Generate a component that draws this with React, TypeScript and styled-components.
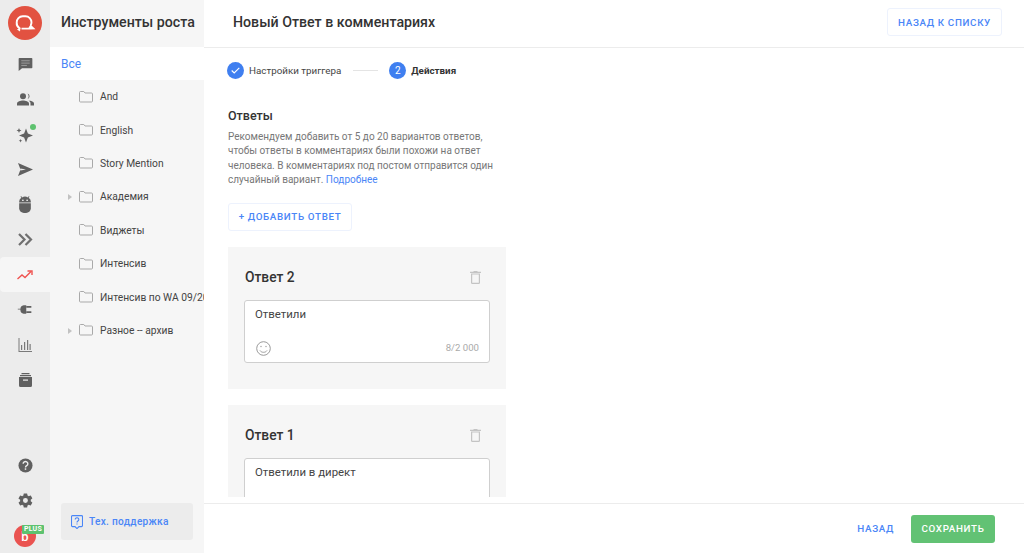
import React from 'react';
import styled, { createGlobalStyle } from 'styled-components';

const Global = createGlobalStyle`
  html, body { margin: 0; padding: 0; height: 100%; background: #fff; }
  body { font-family: Roboto, "Noto Sans", sans-serif; color: #333; overflow: hidden; }
  #root { height: 100%; }
  * { box-sizing: border-box; }
`;

const Page = styled.div`
  display: flex;
  width: 1024px;
  height: 553px;
  overflow: hidden;
`;

const Rail = styled.nav`
  flex: 0 0 50px;
  display: flex;
  flex-direction: column;
  background: #ececec;
`;

const LogoBox = styled.div`
  height: 47px;
  padding: 6px 0 0 8px;
`;

const RailItem = styled.div<{ $active?: boolean }>`
  position: relative;
  height: 35px;
  display: flex;
  align-items: center;
  justify-content: center;
  color: #606060;
  background: ${p => (p.$active ? '#f6f6f6' : 'transparent')};
  border-radius: ${p => (p.$active ? '4px 0 0 4px' : '0')};
`;

const Spacer = styled.div`
  flex: 1;
`;

const Dot = styled.span`
  position: absolute;
  top: 7px;
  left: 30px;
  width: 6px;
  height: 6px;
  border-radius: 50%;
  background: #5ec26f;
`;

const Avatar = styled.div`
  width: 22px;
  height: 22px;
  border-radius: 50%;
  background: #ea5350;
  color: #fff;
  font-size: 13px;
  font-weight: 500;
  line-height: 23px;
  text-align: center;
`;

const PlusBadge = styled.span`
  position: absolute;
  top: 7px;
  left: 22px;
  width: 22px;
  height: 9px;
  border-radius: 1px;
  background: #5ec26f;
  color: #fff;
  font-size: 7px;
  font-weight: 700;
  line-height: 9px;
  text-align: center;
  letter-spacing: 0.2px;
`;

const Sidebar = styled.aside`
  flex: 0 0 154px;
  display: flex;
  flex-direction: column;
  background: #f6f6f6;
  overflow: hidden;
`;

const SideTitle = styled.h2`
  height: 47px;
  margin: 0;
  padding: 0 0 3px 11px;
  display: flex;
  align-items: center;
  font-size: 14.2px;
  font-weight: 500;
  color: #333;
  white-space: nowrap;
`;

const AllRow = styled.div`
  height: 33px;
  padding-left: 11px;
  display: flex;
  align-items: center;
  background: #fff;
  color: #4a86f7;
  font-size: 12px;
`;

const TreeRow = styled.div`
  position: relative;
  height: 33.4px;
  padding-left: 29px;
  display: flex;
  align-items: center;
  gap: 7px;
  font-size: 10.25px;
  color: #444;
  white-space: nowrap;
  svg { flex: none; }
`;

const Caret = styled.span`
  position: absolute;
  left: 18px;
  top: 14px;
  width: 0;
  height: 0;
  border-left: 4px solid #c2c2c2;
  border-top: 3px solid transparent;
  border-bottom: 3px solid transparent;
`;

const SupportBox = styled.div`
  margin: auto 11px 13px;
  height: 37px;
  display: flex;
  align-items: center;
  gap: 6px;
  padding-left: 10px;
  background: #ececec;
  border-radius: 3px;
  color: #4a86f7;
  font-size: 10.1px;
  font-weight: 500;
  letter-spacing: 0.3px;
  white-space: nowrap;
`;

const Main = styled.main`
  flex: 1;
  min-width: 0;
  display: flex;
  flex-direction: column;
`;

const TopBar = styled.header`
  flex: 0 0 48px;
  display: flex;
  align-items: center;
  justify-content: space-between;
  padding: 0 22px 3px 29px;
  border-bottom: 1px solid #ececec;
`;

const PageTitle = styled.h1`
  margin: 0;
  font-size: 14.2px;
  font-weight: 500;
  color: #333;
`;

const OutlineButton = styled.button`
  width: 115px;
  height: 28px;
  padding: 0;
  background: #fff;
  border: 1px solid #edf2fd;
  border-radius: 3px;
  color: #4a86f7;
  font: 500 9.8px Roboto, sans-serif;
  letter-spacing: 0.65px;
  white-space: nowrap;
`;

const Body = styled.div`
  flex: 0 0 449px;
  margin-bottom: 6px;
  overflow: hidden;
  padding: 14px 0 0 24px;
`;

const Stepper = styled.div`
  height: 17px;
  display: flex;
  align-items: center;
  font-size: 9.8px;
  color: #444;
  margin-left: -1px;
`;

const StepDot = styled.span`
  width: 17px;
  height: 17px;
  margin-right: 5px;
  border-radius: 50%;
  background: #3f7ff0;
  color: #fff;
  font-size: 10px;
  display: flex;
  align-items: center;
  justify-content: center;
`;

const StepLine = styled.span`
  width: 25px;
  height: 1px;
  margin: 0 11px 0 12px;
  background: #e4e4e4;
`;

const StepBold = styled.span`
  font-weight: 700;
  color: #333;
`;

const SectionTitle = styled.h3`
  margin: 28px 0 0;
  font-size: 12.5px;
  line-height: 18px;
  font-weight: 500;
  color: #333;
`;

const Paragraph = styled.p`
  width: 278px;
  margin: 5px 0 0;
  font-size: 10px;
  line-height: 14.4px;
  color: #777;
`;

const LinkText = styled.span`
  color: #4a86f7;
`;

const AddButton = styled(OutlineButton)`
  display: block;
  margin-top: 15px;
  width: 124px;
`;

const Card = styled.section`
  width: 278px;
  height: 142px;
  margin-top: 16px;
  padding: 17px 16px 0 16px;
  background: #f6f6f6;
`;

const CardHead = styled.div`
  height: 27px;
  padding: 0 9px 0 1px;
  display: flex;
  align-items: center;
  justify-content: space-between;
  margin-bottom: 9px;
`;

const CardTitle = styled.h4`
  margin: 0;
  font-size: 13.8px;
  font-weight: 500;
  color: #333;
`;

const Field = styled.div`
  height: 63px;
  padding: 6px 10px 0 10px;
  background: #fff;
  border: 1px solid #cfcfcf;
  border-radius: 3px;
  font-size: 11.4px;
  line-height: 14px;
  color: #444;
  display: flex;
  flex-direction: column;
  justify-content: space-between;
`;

const FieldFoot = styled.div`
  display: flex;
  align-items: center;
  justify-content: space-between;
  padding: 0 0 6px 1px;
`;

const Counter = styled.span`
  font-size: 9.6px;
  color: #aaa;
`;

const Footer = styled.footer`
  flex: 1;
  display: flex;
  align-items: center;
  justify-content: flex-end;
  gap: 17px;
  padding: 0 29px 0 0;
  border-top: 1px solid #ececec;
`;

const BackLink = styled.span`
  color: #4a86f7;
  font-size: 9.8px;
  font-weight: 500;
  letter-spacing: 0.65px;
`;

const SaveButton = styled.button`
  width: 84px;
  height: 28px;
  border: 0;
  border-radius: 3px;
  background: #62c274;
  color: #fff;
  font: 500 9.8px Roboto, sans-serif;
  letter-spacing: 0.65px;
`;

const Logo = () => (
  <svg width="34" height="34" viewBox="0 0 34 34">
    <circle cx="17" cy="17" r="17" fill="#e25241" />
    <path d="M11.500 22.300A6.300 6.300 0 0 1 8.700 16.500a6 6 0 0 1 6-6.200h2.800a6 6 0 0 1 6 6c0 .9-.2 1.700-.6 2.500" fill="none" stroke="#fff" strokeWidth="1.900" strokeLinecap="round" />
    <path d="M22.500 18.500l5 4.700-5.500.4h-8.500v-1.800h7z" fill="#fff" />
    <path d="M12.500 21.500l-.5 4-3-2z" fill="#fff" />
  </svg>
);

const ChatIcon = () => (
  <svg width="15" height="15" viewBox="0 0 16 16" fill="currentColor">
    <path d="M1.500 1h13a.8.8 0 0 1 .8.8v9.400a.8.8 0 0 1-.8.8H4.300L.7 15V1.800A.8.8 0 0 1 1.500 1z" />
    <path d="M3.500 4h9M3.500 6.500h9M3.500 9h6" stroke="#a0a0a0" strokeWidth="1" />
  </svg>
);
const UsersIcon = () => (
  <svg width="17" height="13" viewBox="0 0 17 13" fill="currentColor">
    <circle cx="6" cy="3.200" r="3" />
    <path d="M0 12.500v-2C0 8.400 3.500 7.400 6 7.400s6 1 6 3.100v2z" />
    <path d="M10.500.4a3 3 0 0 1 0 5.700 4.500 4.500 0 0 0 0-5.700z" />
    <path d="M11.500 7.600c2.500.3 5.500 1.200 5.500 3v1.900h-3.500v-2c0-1.100-.7-2.100-2-2.900z" />
  </svg>
);
const SparkIcon = () => (
  <svg width="18" height="18" viewBox="0 0 18 18" fill="currentColor">
    <path d="M10 2.500l1.900 5.100L17 9.500l-5.100 1.900L10 16.500l-1.900-5.100L3 9.500l5.100-1.900z" />
    <path d="M3 2l.7 1.800 1.800.7-1.800.7L3 7l-.7-1.800L.5 4.500l1.800-.7z" />
    <path d="M4.500 13l.5 1.300 1.300.5-1.300.5-.5 1.300-.5-1.300-1.300-.5 1.300-.5z" />
  </svg>
);
const SendIcon = () => (
  <svg width="15" height="13" viewBox="0 0 15 13" fill="currentColor">
    <path d="M0 0l15 6.500L0 13l2.500-6.500zM2.500 5.500v2L8 6.500z" />
  </svg>
);
const BotIcon = () => (
  <svg width="12" height="17" viewBox="0 0 11 16" fill="currentColor">
    <path d="M0 6a5.500 5 0 0 1 2-4.300L1.300.4l.6-.3.800 1.200a5.500 5 0 0 1 5.600 0L9.100.1l.6.3-.7 1.300A5.500 5 0 0 1 11 6z" />
    <path d="M0 6.800h11v4.700a4.500 4.500 0 0 1-4.500 4.500h-2A4.500 4.500 0 0 1 0 11.500z" />
    <circle cx="3.500" cy="4" r=".8" fill="#ececec" />
    <circle cx="7.500" cy="4" r=".8" fill="#ececec" />
  </svg>
);
const ChevronsIcon = () => (
  <svg width="15" height="13" viewBox="0 0 15 13" fill="none" stroke="#707070" strokeWidth="2.200">
    <path d="M1 1l5.500 5.500L1 12M7.500 1l5.500 5.500L7.500 12" />
  </svg>
);
const TrendIcon = () => (
  <svg width="16" height="10" viewBox="0 0 16 10" fill="none" stroke="#ef5350" strokeWidth="1.400">
    <path d="M.5 9l4.500-4 3 2.500L14 1.500" />
    <path d="M10.500 1h4.500v4" />
  </svg>
);
const PlugIcon = () => (
  <svg width="16" height="11" viewBox="0 0 17 13" fill="currentColor">
    <path d="M0 5.500h3v1H0zM3 6.500A4.500 5 0 0 1 7 1.500h3v10H7a4.500 5 0 0 1-4-5z" />
    <path d="M10 2.500h6v2h-6zM10 8.500h6v2h-6z" />
  </svg>
);
const ChartIcon = () => (
  <svg width="14" height="14" viewBox="0 0 14 14" fill="#7a7a7a">
    <path d="M.5 0h1v13h12.500v1H.5z" />
    <path d="M3.500 7h1.200v5H3.500zM6.500 4h1.200v8H6.500zM9.500 2h1.200v10H9.500zM12 6h1.200v6H12z" transform="translate(-.5 0)" />
  </svg>
);
const ArchiveIcon = () => (
  <svg width="13" height="14" viewBox="0 0 13 14" fill="currentColor">
    <path d="M2.500 0h8v1.200h-8zM1 2h11v1.300H1zM0 4h13v8.500a1.500 1.500 0 0 1-1.500 1.500h-10A1.500 1.500 0 0 1 0 12.500z" />
    <path d="M4 6.500h5v1.200H4z" fill="#ececec" />
  </svg>
);
const HelpIcon = () => (
  <svg width="15" height="15" viewBox="0 0 16 16">
    <circle cx="8" cy="8" r="7.500" fill="currentColor" />
    <path d="M5.500 6.200a2.500 2.400 0 1 1 3.800 2c-.9.600-1.300 1-1.300 1.900" fill="none" stroke="#ececec" strokeWidth="1.500" />
    <rect x="7.200" y="11" width="1.600" height="1.600" fill="#ececec" />
  </svg>
);
const GearIcon = () => (
  <svg width="17" height="17" viewBox="0 0 24 24" fill="currentColor">
    <path d="M19.400 13c.04-.3.06-.65.06-1s-.02-.7-.07-1l2.100-1.650a.5.500 0 0 0 .12-.64l-2-3.460a.5.500 0 0 0-.6-.22l-2.500 1a7.300 7.300 0 0 0-1.700-1l-.38-2.650A.5.500 0 0 0 13.900 2h-4a.5.500 0 0 0-.5.42L9.040 5.070a7.700 7.700 0 0 0-1.700 1l-2.500-1a.5.500 0 0 0-.6.22l-2 3.460a.5.500 0 0 0 .12.64L4.460 11a7.900 7.900 0 0 0 0 2l-2.100 1.650a.5.500 0 0 0-.12.64l2 3.460c.12.22.38.3.6.22l2.500-1c.52.4 1.080.73 1.700 1l.38 2.650c.04.24.25.42.5.42h4c.25 0 .46-.18.5-.42l.37-2.650a7.700 7.700 0 0 0 1.700-1l2.500 1c.22.08.48 0 .6-.22l2-3.460a.5.500 0 0 0-.12-.64zM11.900 15.500a3.500 3.500 0 1 1 0-7 3.500 3.500 0 0 1 0 7z" />
  </svg>
);
const FolderIcon = () => (
  <svg width="14" height="12" viewBox="0 0 14 12" fill="none" stroke="#a9a9a9" strokeWidth="1">
    <path d="M.5 1.500a1 1 0 0 1 1-1h3.300l1.200 1.500h6.500a1 1 0 0 1 1 1v7a1 1 0 0 1-1 1h-11a1 1 0 0 1-1-1z" />
  </svg>
);
const SupportIcon = () => (
  <svg width="12" height="14" viewBox="0 0 12 14" fill="none" stroke="#4a86f7" strokeWidth="1.100">
    <path d="M1.500 .6h9a1 1 0 0 1 1 1v9a1 1 0 0 1-1 1H8l-2 2-2-2H1.500a1 1 0 0 1-1-1v-9a1 1 0 0 1 1-1z" />
    <path d="M4.200 4.500a1.800 1.700 0 1 1 2.700 1.500c-.6.400-.9.700-.9 1.500M6 8.500v1" />
  </svg>
);
const TrashIcon = () => (
  <svg width="11" height="13" viewBox="0 0 11 13" fill="none" stroke="#c4c4c4" strokeWidth="1.200">
    <path d="M1.600 3v8.800a.7.700 0 0 0 .7.600h6.400a.7.700 0 0 0 .7-.6V3z" />
    <path d="M0 1.400h11M3.500.5h4" />
  </svg>
);
const SmileIcon = () => (
  <svg width="15" height="15" viewBox="0 0 15 15" fill="none" stroke="#9a9a9a" strokeWidth="1">
    <circle cx="7.500" cy="7.500" r="6.800" />
    <path d="M4 9.500c.8 1.200 2 1.800 3.500 1.800s2.700-.6 3.500-1.800" />
    <circle cx="5" cy="5.500" r=".7" fill="#9a9a9a" stroke="none" />
    <circle cx="10" cy="5.500" r=".7" fill="#9a9a9a" stroke="none" />
  </svg>
);
const CheckIcon = () => (
  <svg width="9" height="7" viewBox="0 0 9 7" fill="none" stroke="#fff" strokeWidth="1.100">
    <path d="M.7 3.500l2.500 2.500L8.300.8" />
  </svg>
);

const folders = [
  { name: 'And' },
  { name: 'English' },
  { name: 'Story Mention' },
  { name: 'Академия', caret: true },
  { name: 'Виджеты' },
  { name: 'Интенсив' },
  { name: 'Интенсив по WA 09/2020' },
  { name: 'Разное -- архив', caret: true },
];

const answers = [
  { title: 'Ответ 2', text: 'Ответили', count: '8/2 000' },
  { title: 'Ответ 1', text: 'Ответили в директ', count: '17/2 000' },
];

export default function App() {
  return (
    <Page>
      <Global />
      <Rail>
        <LogoBox><Logo /></LogoBox>
        <RailItem><ChatIcon /></RailItem>
        <RailItem><UsersIcon /></RailItem>
        <RailItem><SparkIcon /><Dot /></RailItem>
        <RailItem><SendIcon /></RailItem>
        <RailItem><BotIcon /></RailItem>
        <RailItem><ChevronsIcon /></RailItem>
        <RailItem $active><TrendIcon /></RailItem>
        <RailItem><PlugIcon /></RailItem>
        <RailItem><ChartIcon /></RailItem>
        <RailItem><ArchiveIcon /></RailItem>
        <Spacer />
        <RailItem><HelpIcon /></RailItem>
        <RailItem><GearIcon /></RailItem>
        <RailItem><Avatar>b</Avatar><PlusBadge>PLUS</PlusBadge></RailItem>
      </Rail>
      <Sidebar>
        <SideTitle>Инструменты роста</SideTitle>
        <AllRow>Все</AllRow>
        {folders.map(f => (
          <TreeRow key={f.name}>
            {f.caret && <Caret />}
            <FolderIcon />
            {f.name}
          </TreeRow>
        ))}
        <SupportBox><SupportIcon />Тех. поддержка</SupportBox>
      </Sidebar>
      <Main>
        <TopBar>
          <PageTitle>Новый Ответ в комментариях</PageTitle>
          <OutlineButton>НАЗАД К СПИСКУ</OutlineButton>
        </TopBar>
        <Body>
          <Stepper>
            <StepDot><CheckIcon /></StepDot>
            Настройки триггера
            <StepLine />
            <StepDot>2</StepDot>
            <StepBold>Действия</StepBold>
          </Stepper>
          <SectionTitle>Ответы</SectionTitle>
          <Paragraph>
            Рекомендуем добавить от 5 до 20 вариантов ответов, чтобы ответы в комментариях были похожи на ответ человека. В комментариях под постом отправится один случайный вариант. <LinkText>Подробнее</LinkText>
          </Paragraph>
          <AddButton>+ ДОБАВИТЬ ОТВЕТ</AddButton>
          {answers.map(a => (
            <Card key={a.title}>
              <CardHead>
                <CardTitle>{a.title}</CardTitle>
                <TrashIcon />
              </CardHead>
              <Field>
                {a.text}
                <FieldFoot>
                  <SmileIcon />
                  <Counter>{a.count}</Counter>
                </FieldFoot>
              </Field>
            </Card>
          ))}
        </Body>
        <Footer>
          <BackLink>НАЗАД</BackLink>
          <SaveButton>СОХРАНИТЬ</SaveButton>
        </Footer>
      </Main>
    </Page>
  );
}
